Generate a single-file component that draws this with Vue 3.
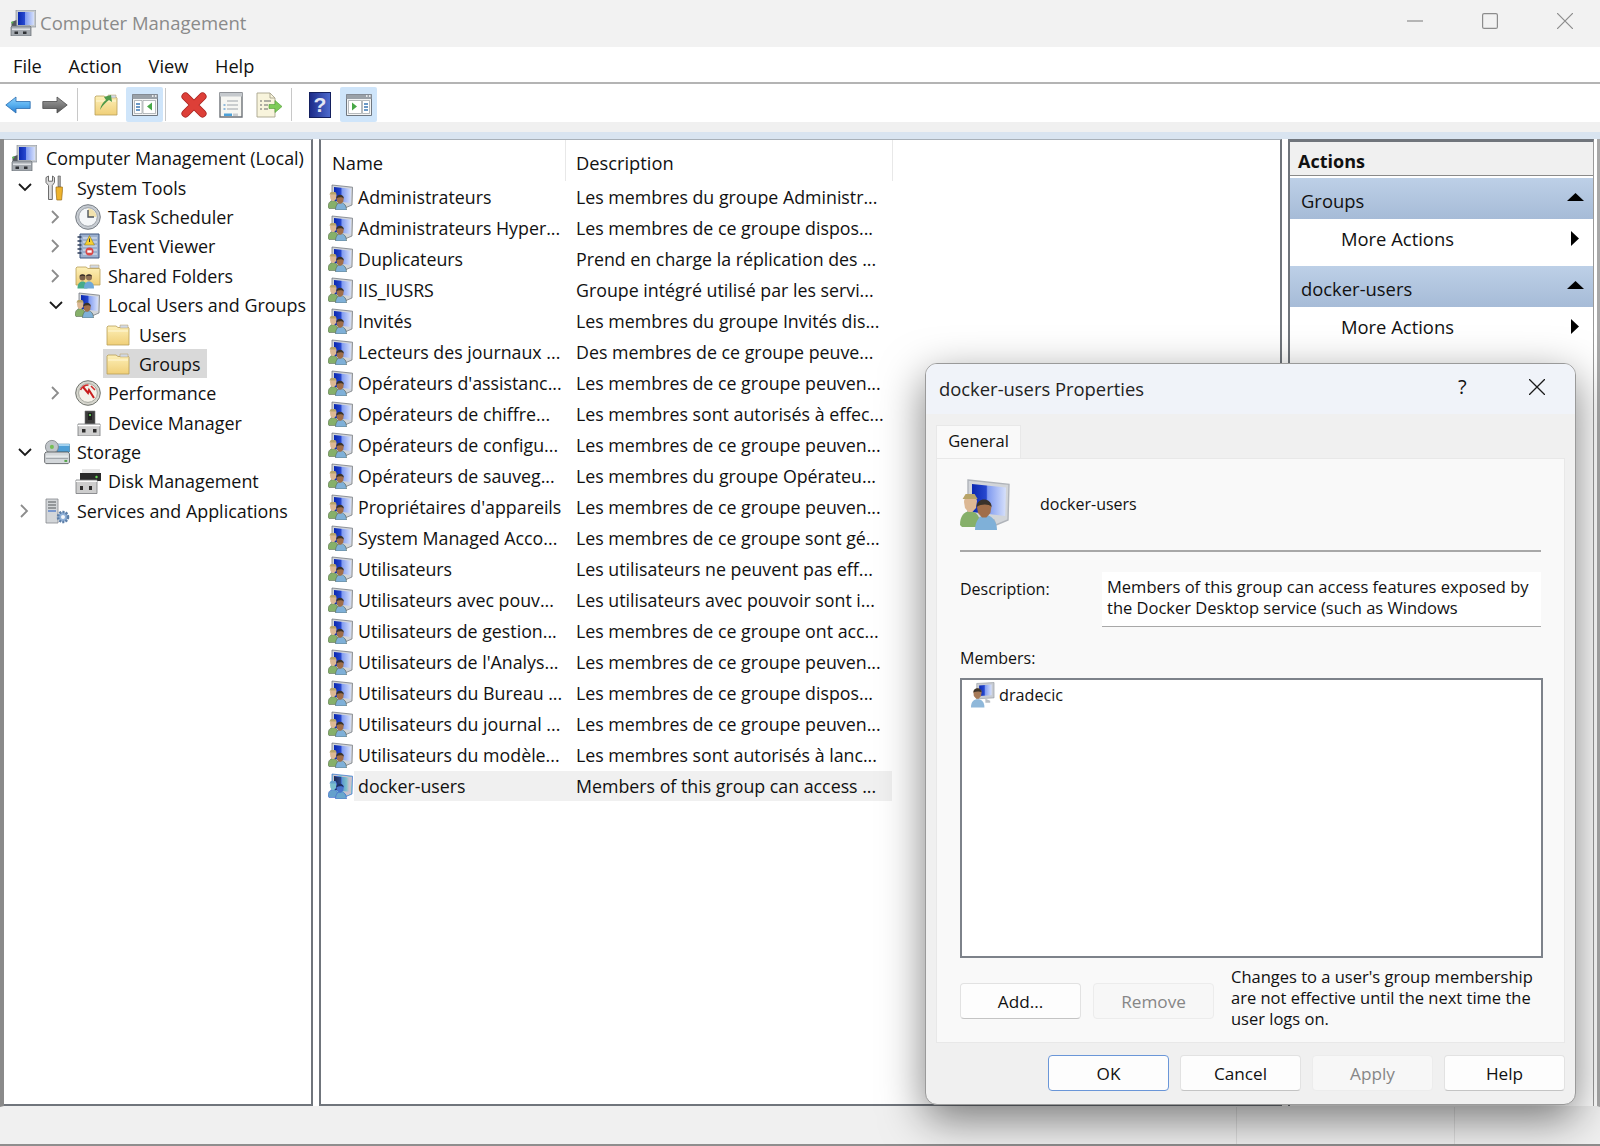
<template>
  <div class="window">
    <svg class="defs" width="0" height="0">
      <defs>
        <linearGradient id="scr" x1="0" y1="0" x2="1" y2="0">
          <stop offset="0" stop-color="#0a28b0" />
          <stop offset="0.42" stop-color="#2748cf" />
          <stop offset="0.46" stop-color="#7f9af0" />
          <stop offset="1" stop-color="#d6e0fb" />
        </linearGradient>
        <linearGradient id="fold" x1="0" y1="0" x2="0" y2="1">
          <stop offset="0" stop-color="#fdf0b8" />
          <stop offset="1" stop-color="#f0cf78" />
        </linearGradient>
        <linearGradient id="blueArrow" x1="0" y1="0" x2="0" y2="1">
          <stop offset="0" stop-color="#8fd0fa" />
          <stop offset="0.5" stop-color="#58b0f0" />
          <stop offset="1" stop-color="#2a7cd0" />
        </linearGradient>
        <linearGradient id="grayArrow" x1="0" y1="0" x2="0" y2="1">
          <stop offset="0" stop-color="#a0a0a0" />
          <stop offset="0.5" stop-color="#7c7c7c" />
          <stop offset="1" stop-color="#555" />
        </linearGradient>
        <linearGradient id="helpBook" x1="0" y1="0" x2="1" y2="0">
          <stop offset="0" stop-color="#1b2a88" />
          <stop offset="1" stop-color="#4f6ccf" />
        </linearGradient>
        <symbol id="group" viewBox="0 0 26 26">
          <path class="mon" d="M4 1l20.500 2.200-.5 17.800-6 2.500-1-2.500L4 19z" fill="#d2d5d9" />
          <path d="M6 3l17 1.800-.4 14.200L6 17z" fill="url(#scr)" />
          <path class="body" d="M0 23.500c0-4.500 1.800-6.500 5-7 3.500.5 5 2.500 5 7l-1 1H1z" fill="#86b06a" />
          <path d="M2 12c0-4 6-4.500 6.500-.5l-.5 3.500-1.800 2H4.200L2.500 15z" fill="#dcb894" />
          <path d="M1.300 10.500l1.500-2.500h4.500l1.500 2.500z" fill="#b8a468" />
          <path class="body" d="M7.500 26c0-5 2.800-7.500 5-7.800 2.800.3 6 2.800 6 7.800z" fill="#7fb0d8" />
          <path d="M8.500 14.500c0-4.500 7-4.500 7.200 0l-.5 3-2 2.300h-2.200l-2-2.300z" fill="#a06e4a" />
          <path d="M8.300 14.500c-.2-5 7.600-5 7.500 0-1.500-1.600-5-1.600-7.500 0z" fill="#39322b" />
        </symbol>
        <symbol id="user" viewBox="0 0 26 26">
          <path d="M7 1l18-1v16l-18 1z" fill="#c8ccd2" stroke="#8f959c" stroke-width="0.6" />
          <path d="M9.500 3l13-.8v11l-13 .8z" fill="url(#scr)" />
          <path d="M16 17l5 2v2h-5z" fill="#b9bec4" />
          <path d="M3.500 10c0-5 8.500-5 8.700 0l-.7 4-2.500 3H6.500l-2.500-3z" fill="#a77a58" />
          <path d="M3.500 10.500c0-6 8.700-6 8.700 0-2-1.500-6-1.500-8.700 0z" fill="#3d342b" />
          <path d="M1 26c0-6 3-8.500 7-8.500s7 2.500 7 8.500z" fill="#8fb8da" />
        </symbol>
        <symbol id="computer" viewBox="0 0 26 26">
          <path d="M6 0h20v17H6z" fill="#c6cbd0" stroke="#7e858c" stroke-width="0.6" />
          <path d="M8 2h16v13H8z" fill="url(#scr)" />
          <path d="M1.500 12l5-2v6l-5 1z" fill="#55595e" />
          <circle cx="2.300" cy="12.500" r="1.100" fill="#56c04a" />
          <path d="M1 17l1-1h18l1 1v9H1z" fill="#a4a9af" stroke="#666b70" stroke-width="0.7" />
          <path d="M2 19.200h18" stroke="#e8eaec" stroke-width="1.300" />
          <path d="M4.500 21.500h3.500v2.500H4.500zM13 21.500h3.500v2.500H13z" fill="#2e3135" />
        </symbol>
        <symbol id="tools" viewBox="0 0 26 26">
          <path d="M2 2.500v5l2.500 3v14h3.800v-14L10.500 7.500v-5L8.500 1v5.200H4.500V1z" fill="#dcdcdc" stroke="#5d5d5d" stroke-width="0.9" />
          <path d="M14 1h2.400v11H14z" fill="#a9a9a9" stroke="#5d5d5d" stroke-width="0.6" />
          <path d="M12 12h6.400v4l-.8 9h-4.800l-.8-9z" fill="#eeb32c" stroke="#9a6c14" stroke-width="0.7" />
        </symbol>
        <symbol id="clock" viewBox="0 0 26 26">
          <circle cx="13" cy="13" r="12.300" fill="#c6cbd1" stroke="#777d84" stroke-width="1" />
          <circle cx="13" cy="13" r="9.300" fill="#f4f6f8" stroke="#9aa0a7" />
          <path d="M13 13V4.500a8.500 8.500 0 0 1 8.500 8.500z" fill="#f2e2ae" />
          <path d="M13 6v7h6" fill="none" stroke="#4f555d" stroke-width="1.400" />
        </symbol>
        <symbol id="event" viewBox="0 0 26 26">
          <path d="M5 1h19v24H5z" fill="#9cb0cf" stroke="#3e5680" stroke-width="1" />
          <path d="M2.500 4h4M2.500 8h4M2.500 12h4M2.500 16h4M2.500 20h4" stroke="#2d3c58" stroke-width="1.400" />
          <path d="M8 5h14M8 9h14M8 13h14M8 17h14M8 21h14" stroke="#e4eaf3" stroke-width="1" />
          <path d="M14.500 2.500l5 9.500h-10z" fill="#f6ce30" stroke="#80701a" stroke-width="0.5" />
          <rect x="14" y="5.500" width="1" height="3.500" fill="#333" />
          <circle cx="14.500" cy="18.500" r="4" fill="#d84a4a" />
          <rect x="12.300" y="17.300" width="4.400" height="2.400" fill="#fff" />
        </symbol>
        <symbol id="folder" viewBox="0 0 24 24">
          <path d="M1 4l1-1h8l2 1.500h10.500l.5 .5V22H1z" fill="url(#fold)" stroke="#b89e58" stroke-width="0.8" />
          <path d="M14 2h8v3h-8z" fill="#cfd8e6" stroke="#b89e58" stroke-width="0.5" />
          <path d="M2 8h20" stroke="#fff8d8" stroke-width="1" />
        </symbol>
        <symbol id="shared" viewBox="0 0 26 26">
          <path d="M1 5l1-1h9l2 1.500h11.500l.5 .5V22H1z" fill="url(#fold)" stroke="#b89e58" stroke-width="0.8" />
          <path d="M15 2h9v3h-9z" fill="#cfd8e6" stroke="#b89e58" stroke-width="0.5" />
          <circle cx="7.500" cy="14.500" r="3" fill="#7a6048" />
          <path d="M4.500 13.500c0-3 6-3 6 0-2-1-4-1-6 0z" fill="#3a3028" />
          <circle cx="14" cy="14.500" r="3" fill="#8f7154" />
          <path d="M11 13.500c0-3 6-3 6 0-2-1-4-1-6 0z" fill="#3a3028" />
          <path d="M2.500 25.500c0-5 2-7 5-7s5 2 5 7z" fill="#46ab8a" />
          <path d="M9 25.500c0-5 2-7 5-7s5 2 5 7z" fill="#6fa8d8" />
        </symbol>
        <symbol id="gauge" viewBox="0 0 26 26">
          <circle cx="13" cy="13" r="12.300" fill="#d6d6ce" stroke="#71746e" stroke-width="1" />
          <circle cx="13" cy="13" r="9.400" fill="#f4f2ea" stroke="#a5a79f" />
          <path d="M5.500 10c2-4 5-5 8-5M16 6l4 4" fill="none" stroke="#d02c2c" stroke-width="1.600" />
          <path d="M8 7l5 6 1-3 5 8" fill="none" stroke="#c81e1e" stroke-width="2" />
        </symbol>
        <symbol id="device" viewBox="0 0 26 26">
          <path d="M10 1h10v13H10z" fill="#3c3c3c" stroke="#777" stroke-width="0.6" />
          <path d="M13 3h4v7h-4z" fill="#1f1f1f" />
          <circle cx="15" cy="5" r="1.100" fill="#6be05a" />
          <path d="M3 14h22v12H3z" fill="#cfcfcf" stroke="#76797c" stroke-width="0.8" />
          <path d="M3 15.500h22" stroke="#ffffff" stroke-width="1.400" />
          <path d="M7 19h3.500v3.500H7zM18 19h3.500v3.500H18z" fill="#2c2c2c" />
        </symbol>
        <symbol id="storage" viewBox="0 0 28 26">
          <path d="M14 4.500h13.500V13H14z" fill="#4f9fd6" stroke="#39779e" stroke-width="0.7" />
          <path d="M14 4.500h13.500v2H14z" fill="#a8d6f2" />
          <circle cx="8.500" cy="7.500" r="7" fill="#c0c5c9" stroke="#7c8186" stroke-width="0.9" />
          <circle cx="8.500" cy="7.500" r="2.200" fill="#76be56" />
          <path d="M2 13h24l1.500 2v9l-1.500 1.500H2L.7 24v-9z" fill="#d3d7da" stroke="#55595d" stroke-width="0.9" />
          <path d="M2 17.500h24" stroke="#f2f4f5" />
          <path d="M2 20h24" stroke="#9ea3a8" />
          <rect x="22" y="21.500" width="3" height="2.200" fill="#55a54a" />
        </symbol>
        <symbol id="disk" viewBox="0 0 26 26">
          <path d="M7 1h18v5H7z" fill="#e6e6e6" />
          <path d="M5 5h21v8H5z" fill="#2a2a2a" />
          <circle cx="21.500" cy="9" r="1.200" fill="#65dc54" />
          <path d="M1 12h21v13.500H1z" fill="#cdcdcd" stroke="#77797c" stroke-width="0.8" />
          <path d="M1 13.300h21" stroke="#fff" stroke-width="1.200" />
          <path d="M5 18h3v4H5zM14 18h3v4h-3z" fill="#2d2d2d" />
        </symbol>
        <symbol id="services" viewBox="0 0 26 26">
          <path d="M2 1h12v24H2z" fill="#d3d6d9" stroke="#85898d" stroke-width="0.8" />
          <path d="M4 4h8M4 7h8M4 10h8" stroke="#54585c" stroke-width="1.200" />
          <path d="M4 13h8" stroke="#3f6fc8" stroke-width="1.200" />
          <circle cx="19" cy="19" r="5" fill="#8fb0d8" stroke="#5d7fa8" stroke-width="2.600" stroke-dasharray="2 1.200" />
          <circle cx="19" cy="19" r="2" fill="#f4f7fb" />
        </symbol>
      </defs>
    </svg>

    <div class="titlebar">
      <svg class="title-icon"><use href="#computer" /></svg>
      <span class="title-text">Computer Management</span>
      <div class="win-controls">
        <svg width="16" height="16" viewBox="0 0 16 16"><path d="M0 8h16" stroke="#8c8c8c" stroke-width="1.200" /></svg>
        <svg width="16" height="16" viewBox="0 0 16 16"><rect x="0.600" y="0.600" width="14.800" height="14.800" rx="1.500" fill="none" stroke="#8c8c8c" stroke-width="1.200" /></svg>
        <svg width="16" height="16" viewBox="0 0 16 16"><path d="M0 0l16 16M16 0L0 16" stroke="#8c8c8c" stroke-width="1.200" /></svg>
      </div>
    </div>

    <div class="menubar">
      <span v-for="m in menus" :key="m">{{ m }}</span>
    </div>

    <div class="toolbar">
      <div class="tb-btn wide">
        <svg width="26" height="18" viewBox="0 0 26 18"><path d="M.8 9L11 1v4.500h14.200v7H11V17z" fill="url(#blueArrow)" stroke="#2a6cae" stroke-width="0.8" stroke-linejoin="round" /></svg>
      </div>
      <div class="tb-btn wide">
        <svg width="26" height="18" viewBox="0 0 26 18"><path d="M25.200 9L15 1v4.500H.8v7H15V17z" fill="url(#grayArrow)" stroke="#4d4d4d" stroke-width="0.8" stroke-linejoin="round" /></svg>
      </div>
      <i class="tb-sep sep1"></i>
      <div class="tb-btn up">
        <svg width="24" height="24" viewBox="0 0 24 24">
          <use href="#folder" />
          <path d="M6 17c1-5 3-8 6-10l-2-3 7-2 1 7-3-2c-3 2-6 5-9 10z" fill="#4f9a4a" />
        </svg>
      </div>
      <div class="tb-btn active tree-btn">
        <svg width="26" height="22" viewBox="0 0 26 22">
          <path d="M.5 .5h25v21H.5z" fill="#f3f4f4" stroke="#6f7780" />
          <path d="M.5 .5h25v4.500H.5z" fill="#9aa1a8" />
          <path d="M20 2h1.500M23 2h1.500" stroke="#fff" stroke-width="1.300" />
          <path d="M2.500 6.500h7.500v13H2.500zM11 6.500h12.500v13H11z" fill="#fff" stroke="#8a9096" stroke-width="0.6" />
          <path d="M4 10h4M4 13h4M4 16h4" stroke="#3c78b4" stroke-width="1.300" />
          <path d="M20 8.500v8l-5-4z" fill="#48a848" />
        </svg>
      </div>
      <i class="tb-sep sep2"></i>
      <div class="tb-btn del">
        <svg width="26" height="26" viewBox="0 0 26 26">
          <path d="M4.500 4.500l17 17M21.500 4.500l-17 17" stroke="#a82320" stroke-width="8" stroke-linecap="round" />
          <path d="M4.500 4.500l17 17M21.500 4.500l-17 17" stroke="#dd3f38" stroke-width="6.400" stroke-linecap="round" />
        </svg>
      </div>
      <div class="tb-btn prop">
        <svg width="24" height="26" viewBox="0 0 24 26">
          <path d="M1 1h22v24H1z" fill="#f6f6f2" stroke="#6d7278" stroke-width="1.400" />
          <path d="M1 1h22v3.500H1z" fill="#c5c9cd" />
          <path d="M8 9h11M8 13h11M8 17h11" stroke="#9da4aa" stroke-width="1.200" />
          <path d="M4.500 13h2M4.500 17h2" stroke="#2f80c8" stroke-width="1.200" />
          <path d="M5 21.500h8v2.500H5z" fill="#4ba0d8" />
          <path d="M14 21.500h5v2.500h-5z" fill="#c8ccd0" />
        </svg>
      </div>
      <div class="tb-btn export">
        <svg width="26" height="26" viewBox="0 0 26 26">
          <path d="M1 1h13l5 5v19H1z" fill="#f8f4dc" stroke="#a8a48c" stroke-width="0.9" />
          <path d="M14 1v5h5" fill="none" stroke="#a8a48c" stroke-width="0.9" />
          <path d="M4 9h2M8 9h7M4 13h2M8 13h4M4 17h2M8 17h4" stroke="#67686a" stroke-width="1.200" />
          <path d="M13 12.500h6V8.500l7 6-7 6v-4h-6z" fill="#7ecb58" stroke="#4d9a34" stroke-width="0.6" />
        </svg>
      </div>
      <i class="tb-sep sep3"></i>
      <div class="tb-btn help">
        <svg width="22" height="26" viewBox="0 0 22 26">
          <rect x="0.500" y="0.500" width="21" height="25" fill="url(#helpBook)" stroke="#14205e" />
          <text x="11" y="20" text-anchor="middle" class="help-q">?</text>
        </svg>
      </div>
      <div class="tb-btn active pane-btn">
        <svg width="26" height="22" viewBox="0 0 26 22">
          <path d="M.5 .5h25v21H.5z" fill="#f3f4f4" stroke="#6f7780" />
          <path d="M.5 .5h25v4.500H.5z" fill="#9aa1a8" />
          <path d="M20 2h1.500M23 2h1.500" stroke="#fff" stroke-width="1.300" />
          <path d="M2.500 6.500h13v13h-13zM16.500 6.500h7v13h-7z" fill="#fff" stroke="#8a9096" stroke-width="0.6" />
          <path d="M18 10h4M18 13h4M18 16h4" stroke="#3c78b4" stroke-width="1.300" />
          <path d="M6 8.500v8l5-4z" fill="#48a848" />
        </svg>
      </div>
    </div>

    <div class="strip"></div>

    <div class="panes">
      <div class="tree-pane">
        <div
          v-for="t in tree"
          :key="t.label"
          class="tree-row"
          :style="{ paddingLeft: t.level * 31 + 7 + 'px' }"
        >
          <span class="chev">
            <svg v-if="t.open === true" width="14" height="9" viewBox="0 0 14 9"><path d="M1 1l6 6 6-6" fill="none" stroke="#1a1a1a" stroke-width="1.800" /></svg>
            <svg v-else-if="t.open === false" width="9" height="14" viewBox="0 0 9 14"><path d="M1 1l6 6-6 6" fill="none" stroke="#8c8c8c" stroke-width="1.800" /></svg>
          </span>
          <span class="tree-item" :class="{ selected: t.selected, sub: t.icon === 'folder' }">
            <svg class="tree-icon"><use :href="'#' + t.icon" /></svg>
            <span class="tree-label">{{ t.label }}</span>
          </span>
        </div>
      </div>

      <div class="list-pane">
        <div class="list-head">
          <span class="col-name">Name</span>
          <span class="col-desc">Description</span>
        </div>
        <div v-for="g in groups" :key="g.name" class="list-row" :class="{ selected: g.selected }">
          <svg class="row-icon"><use href="#group" /></svg>
          <div class="row-body">
            <span class="col-name">{{ g.name }}</span>
            <span class="col-desc">{{ g.desc }}</span>
          </div>
        </div>
      </div>

      <div class="actions-pane">
        <div class="actions-title">Actions</div>
        <div class="act-head">
          <span>Groups</span>
          <svg width="17" height="8" viewBox="0 0 17 8"><path d="M8.500 0L17 8H0z" fill="#000" /></svg>
        </div>
        <div class="act-item">
          <span>More Actions</span>
          <svg width="8" height="15" viewBox="0 0 8 15"><path d="M0 0l8 7.500L0 15z" fill="#000" /></svg>
        </div>
        <div class="act-head">
          <span>docker-users</span>
          <svg width="17" height="8" viewBox="0 0 17 8"><path d="M8.500 0L17 8H0z" fill="#000" /></svg>
        </div>
        <div class="act-item">
          <span>More Actions</span>
          <svg width="8" height="15" viewBox="0 0 8 15"><path d="M0 0l8 7.500L0 15z" fill="#000" /></svg>
        </div>
      </div>
    </div>

    <div class="statusbar">
      <i class="status-cell"></i>
      <i class="status-cell last"></i>
    </div>

    <div class="dialog">
      <div class="dlg-title">
        <span class="dlg-title-text">docker-users Properties</span>
        <span class="dlg-q">?</span>
        <svg class="dlg-x" width="16" height="16" viewBox="0 0 16 16"><path d="M0 0l16 16M16 0L0 16" stroke="#1a1a1a" stroke-width="1.300" /></svg>
      </div>
      <div class="dlg-body">
        <div class="tab">General</div>
        <div class="tab-panel">
          <div class="identity">
            <svg class="big-icon"><use href="#group" /></svg>
            <span>docker-users</span>
          </div>
          <div class="desc-row">
            <label>Description:</label>
            <div class="desc-field">Members of this group can access features exposed by<br />the Docker Desktop service (such as Windows</div>
          </div>
          <div class="members-label">Members:</div>
          <div class="members-box">
            <div class="member">
              <svg class="member-icon"><use href="#user" /></svg>
              <span>dradecic</span>
            </div>
          </div>
          <div class="member-actions">
            <button class="btn">Add...</button>
            <button class="btn disabled">Remove</button>
            <p class="note">Changes to a user's group membership<br />are not effective until the next time the<br />user logs on.</p>
          </div>
        </div>
        <div class="dlg-buttons">
          <button class="btn default">OK</button>
          <button class="btn">Cancel</button>
          <button class="btn disabled">Apply</button>
          <button class="btn">Help</button>
        </div>
      </div>
    </div>
  </div>
</template>

<script setup>
const menus = ['File', 'Action', 'View', 'Help']

const tree = [
  { label: 'Computer Management (Local)', icon: 'computer', level: 0 },
  { label: 'System Tools', icon: 'tools', level: 0, open: true },
  { label: 'Task Scheduler', icon: 'clock', level: 1, open: false },
  { label: 'Event Viewer', icon: 'event', level: 1, open: false },
  { label: 'Shared Folders', icon: 'shared', level: 1, open: false },
  { label: 'Local Users and Groups', icon: 'group', level: 1, open: true },
  { label: 'Users', icon: 'folder', level: 2 },
  { label: 'Groups', icon: 'folder', level: 2, selected: true },
  { label: 'Performance', icon: 'gauge', level: 1, open: false },
  { label: 'Device Manager', icon: 'device', level: 1 },
  { label: 'Storage', icon: 'storage', level: 0, open: true },
  { label: 'Disk Management', icon: 'disk', level: 1 },
  { label: 'Services and Applications', icon: 'services', level: 0, open: false }
]

const groups = [
  { name: 'Administrateurs', desc: 'Les membres du groupe Administr...' },
  { name: 'Administrateurs Hyper...', desc: 'Les membres de ce groupe dispos...' },
  { name: 'Duplicateurs', desc: 'Prend en charge la réplication des ...' },
  { name: 'IIS_IUSRS', desc: 'Groupe intégré utilisé par les servi...' },
  { name: 'Invités', desc: 'Les membres du groupe Invités dis...' },
  { name: 'Lecteurs des journaux ...', desc: 'Des membres de ce groupe peuve...' },
  { name: "Opérateurs d'assistanc...", desc: 'Les membres de ce groupe peuven...' },
  { name: 'Opérateurs de chiffre...', desc: 'Les membres sont autorisés à effec...' },
  { name: 'Opérateurs de configu...', desc: 'Les membres de ce groupe peuven...' },
  { name: 'Opérateurs de sauveg...', desc: 'Les membres du groupe Opérateu...' },
  { name: "Propriétaires d'appareils", desc: 'Les membres de ce groupe peuven...' },
  { name: 'System Managed Acco...', desc: 'Les membres de ce groupe sont gé...' },
  { name: 'Utilisateurs', desc: 'Les utilisateurs ne peuvent pas eff...' },
  { name: 'Utilisateurs avec pouv...', desc: 'Les utilisateurs avec pouvoir sont i...' },
  { name: 'Utilisateurs de gestion...', desc: 'Les membres de ce groupe ont acc...' },
  { name: "Utilisateurs de l'Analys...", desc: 'Les membres de ce groupe peuven...' },
  { name: 'Utilisateurs du Bureau ...', desc: 'Les membres de ce groupe dispos...' },
  { name: 'Utilisateurs du journal ...', desc: 'Les membres de ce groupe peuven...' },
  { name: 'Utilisateurs du modèle...', desc: 'Les membres sont autorisés à lanc...' },
  { name: 'docker-users', desc: 'Members of this group can access ...', selected: true }
]
</script>

<style>
html, body {
  margin: 0;
  background: #f0f0f0;
}
</style>

<style scoped>
.window {
  position: relative;
  width: 1600px;
  height: 1146px;
  overflow: hidden;
  display: flex;
  flex-direction: column;
  background: #f0f0f0;
  font-family: "Open Sans", "Noto Sans", sans-serif;
  color: #111;
}

.defs {
  position: absolute;
}

/* monitor frame gets darker on the small copies of the icon */
.mon {
  stroke: var(--frame, #b0b4ba);
  stroke-width: 0.7;
}

.body {
  stroke: var(--outline, none);
  stroke-width: 0.5;
}

.row-icon,
.tree-icon {
  --frame: #666c72;
  --outline: #4d5a48;
}

.titlebar {
  height: 47px;
  flex-shrink: 0;
  display: flex;
  align-items: center;
  background: #f2f2f2;
  padding: 0 0 2px 10px;
  box-sizing: border-box;
}

.title-icon {
  width: 26px;
  height: 26px;
}

.title-text {
  margin-left: 4px;
  font-size: 18.500px;
  color: #8a8a8a;
}

.win-controls {
  margin: 0 0 3px auto;
  display: flex;
  gap: 59px;
  padding-right: 27px;
}

.menubar {
  height: 37px;
  flex-shrink: 0;
  display: flex;
  align-items: center;
  gap: 26.700px;
  padding: 2px 0 0 13px;
  background: #fff;
  border-bottom: 2px solid #b4b4b4;
  box-sizing: border-box;
  font-size: 18.200px;
}

.toolbar {
  height: 38px;
  flex-shrink: 0;
  display: flex;
  align-items: center;
  background: #fff;
  padding: 3px 0 0 5px;
  box-sizing: border-box;
}

.tb-btn {
  height: 35px;
  display: flex;
  align-items: center;
  justify-content: center;
}

.tb-btn.wide {
  width: 26px;
  margin-right: 11px;
}

.tb-btn.active {
  width: 37px;
  background: #cfe5fa;
  border-radius: 2px;
}

.tb-sep {
  width: 1px;
  height: 33px;
  background: #c8c8c8;
}

.sep1 {
  margin: 0 16px 0 -2px;
}

.tb-btn.up {
  width: 24px;
  margin-right: 8px;
}

.sep2 {
  margin: 0 15px 0 2px;
}

.tb-btn.del {
  width: 26px;
  margin-right: 12px;
}

.tb-btn.prop {
  width: 24px;
  margin-right: 13px;
}

.tb-btn.export {
  width: 26px;
  margin-right: 9px;
}

.sep3 {
  margin-right: 17px;
}

.tb-btn.help {
  width: 22px;
  margin-right: 9px;
}

.help-q {
  font-family: "Liberation Sans", sans-serif;
  font-weight: bold;
  font-size: 21px;
  fill: #e4e8f4;
}

.strip {
  height: 17px;
  flex-shrink: 0;
  box-sizing: border-box;
  background: #f0f0f0;
  border-bottom: 7px solid #d9e4f0;
}

.panes {
  flex: 1;
  min-height: 0;
  display: flex;
  gap: 6px;
  background: #fff;
  border-left: 4px solid #8a8a8a;
  border-right: 3px solid #a8a8a8;
  border-bottom: 1px solid #f0f0f0;
  padding-right: 3px;
}

.tree-pane {
  width: 309px;
  flex-shrink: 0;
  box-sizing: border-box;
  padding-top: 3.500px;
  background: #fff;
  border-right: 2px solid #70757c;
  border-bottom: 2px solid #70757c;
  border-top: 1px solid #a8b0b8;
}

.tree-row {
  height: 29.400px;
  display: flex;
  align-items: center;
  font-size: 17.900px;
  white-space: nowrap;
}

.chev {
  width: 27px;
  flex-shrink: 0;
  display: flex;
  justify-content: center;
  margin-right: 3px;
}

.tree-row:first-child .chev {
  display: none;
}

.tree-row:first-child .tree-item {
  gap: 9px;
  margin-left: -3px;
}

.tree-item {
  display: flex;
  align-items: center;
  gap: 7px;
  height: 29px;
  padding: 0 6px 0 3px;
}

.tree-item.sub {
  gap: 9px;
}

.tree-item.selected {
  background: #d9d9d9;
}

.tree-icon {
  width: 26px;
  height: 26px;
  flex-shrink: 0;
}

.tree-item.sub .tree-icon {
  width: 24px;
  height: 24px;
}

.list-pane {
  width: 963px;
  flex-shrink: 0;
  box-sizing: border-box;
  background: #fff;
  border: 2px solid #70757c;
  border-top: 1px solid #a8b0b8;
  padding-left: 7px;
}

.list-head {
  height: 41px;
  display: flex;
  margin-left: -7px;
  font-size: 18.300px;
  line-height: 45px;
}

.list-head .col-name {
  width: 245px;
  padding-left: 11px;
  box-sizing: border-box;
  border-right: 1px solid #e8e8e8;
}

.list-head .col-desc {
  width: 327px;
  padding-left: 10px;
  box-sizing: border-box;
  border-right: 1px solid #e8e8e8;
}

.list-row {
  height: 31.030px;
  display: flex;
  align-items: center;
  font-size: 17.800px;
  white-space: nowrap;
}

.row-icon {
  width: 26px;
  height: 26px;
  flex-shrink: 0;
}

.list-row.selected .row-icon {
  filter: grayscale(1) sepia(1) hue-rotate(185deg) saturate(4) brightness(0.8);
}

.row-body {
  width: 538px;
  height: 30px;
  display: flex;
  align-items: center;
  padding-left: 4px;
  box-sizing: border-box;
}

.row-body .col-name {
  width: 218px;
  flex-shrink: 0;
}

.list-row.selected .row-body {
  background: #f0f0f0;
}

.actions-pane {
  width: 306px;
  flex-shrink: 0;
  box-sizing: border-box;
  background: #fff;
  border-top: 3px solid #70757c;
  border-left: 2px solid #70757c;
  border-right: 1px solid #9a9a9a;
  font-size: 18.400px;
}

.actions-title {
  height: 34px;
  line-height: 38px;
  box-sizing: border-box;
  padding-left: 8px;
  margin-bottom: 2px;
  background: #f0f0f0;
  border-bottom: 1px solid #8a8a8a;
  font-weight: 700;
  font-size: 18px;
}

.act-head {
  height: 41px;
  display: flex;
  align-items: center;
  justify-content: space-between;
  padding: 0 9px 0 11px;
  background: linear-gradient(#bdd0e7, #a6bbd7);
}

.act-head span {
  padding-top: 3px;
}

.act-head svg {
  margin-top: -4px;
}

.act-item {
  height: 47px;
  box-sizing: border-box;
  padding: 0 14px 8px 51px;
  display: flex;
  align-items: center;
  justify-content: space-between;
}

.statusbar {
  height: 39px;
  flex-shrink: 0;
  display: flex;
  justify-content: flex-end;
  background: #f0f0f0;
  border-bottom: 2px solid #8e8e8e;
  box-sizing: border-box;
}

.status-cell {
  width: 217px;
  border-left: 1px solid #dcdcdc;
}

.status-cell.last {
  width: 145px;
}

.dialog {
  position: absolute;
  left: 925px;
  top: 363px;
  width: 651px;
  height: 742px;
  box-sizing: border-box;
  border: 1px solid #9a9a9a;
  border-radius: 12px;
  overflow: hidden;
  background: #f0f0f0;
  box-shadow: 0 14px 44px rgba(0, 0, 0, 0.5);
  display: flex;
  flex-direction: column;
  font-size: 16.500px;
}

.dlg-title {
  height: 50px;
  flex-shrink: 0;
  display: flex;
  align-items: center;
  background: #f0f3f9;
  padding: 0 0 2px 13px;
  box-sizing: border-box;
  position: relative;
}

.dlg-title-text {
  font-size: 18.400px;
  color: #222;
}

.dlg-q {
  position: absolute;
  left: 532px;
  top: 9px;
  font-size: 20px;
}

.dlg-x {
  position: absolute;
  left: 603px;
  top: 15px;
}

.dlg-body {
  flex: 1;
  padding: 11px 10px 0;
}

.tab {
  width: 85px;
  height: 34px;
  line-height: 30px;
  text-align: center;
  background: #f9f9f9;
  box-sizing: border-box;
  border: 1px solid #e8e8e8;
  border-bottom: none;
}

.tab-panel {
  height: 585px;
  box-sizing: border-box;
  background: #f9f9f9;
  border: 1px solid #e8e8e8;
  margin-top: -1px;
  padding: 0 23px;
  width: 629px;
}

.identity {
  height: 93px;
  display: flex;
  align-items: center;
  gap: 28px;
  border-bottom: 2px solid #a8a8a8;
  box-sizing: border-box;
  font-size: 16px;
  padding-bottom: 2px;
}

.big-icon {
  width: 52px;
  height: 52px;
}

.desc-row {
  display: flex;
  margin-top: 20px;
  height: 55px;
}

.desc-row label {
  width: 142px;
  line-height: 34px;
  font-size: 16px;
}

.desc-field {
  width: 439px;
  height: 55px;
  box-sizing: border-box;
  background: #fff;
  border-bottom: 1px solid #a8a8a8;
  padding: 4px 5px;
  line-height: 21px;
  white-space: nowrap;
  overflow: hidden;
}

.members-label {
  margin-top: 19px;
  line-height: 24px;
  font-size: 16px;
}

.members-box {
  margin-top: 8px;
  height: 280px;
  width: 583px;
  box-sizing: border-box;
  border: 2px solid #7d828a;
  background: #fff;
}

.member {
  display: flex;
  align-items: center;
  gap: 4px;
  padding: 2px 0 0 8px;
  font-size: 16.200px;
}

.member-icon {
  width: 25px;
  height: 26px;
}

.member-actions {
  display: flex;
  align-items: flex-start;
  margin-top: 10px;
}

.btn {
  width: 121px;
  height: 36px;
  box-sizing: border-box;
  font: inherit;
  font-size: 17.200px;
  color: #111;
  background: #fdfdfd;
  border: 1px solid #e2e2e2;
  border-bottom-color: #c4c4c4;
  border-radius: 4px;
  padding: 0;
}

.btn.disabled {
  background: #f7f7f7;
  color: #868686;
  border-color: #ececec;
}

.btn.default {
  border-color: #6a96d8;
}

.member-actions .btn {
  margin-top: 15px;
  margin-right: 12px;
}

.note {
  margin: -2px 0 0 5px;
  line-height: 21px;
  white-space: nowrap;
}

.dlg-buttons {
  display: flex;
  justify-content: flex-end;
  gap: 11px;
  margin-top: 12px;
}
</style>
